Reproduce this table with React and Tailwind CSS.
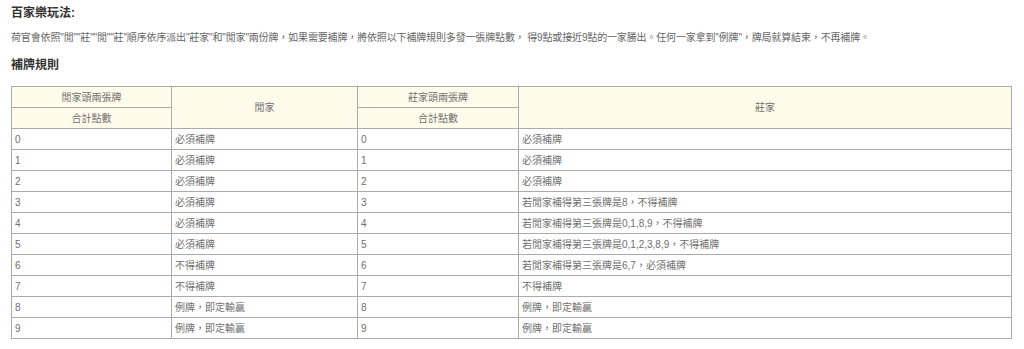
import React from "react";

const rows = [
  ["0", "必須補牌", "0", "必須補牌"],
  ["1", "必須補牌", "1", "必須補牌"],
  ["2", "必須補牌", "2", "必須補牌"],
  ["3", "必須補牌", "3", "若閒家補得第三張牌是8，不得補牌"],
  ["4", "必須補牌", "4", "若閒家補得第三張牌是0,1,8,9，不得補牌"],
  ["5", "必須補牌", "5", "若閒家補得第三張牌是0,1,2,3,8,9，不得補牌"],
  ["6", "不得補牌", "6", "若閒家補得第三張牌是6,7，必須補牌"],
  ["7", "不得補牌", "7", "不得補牌"],
  ["8", "例牌，即定輸贏", "8", "例牌，即定輸贏"],
  ["9", "例牌，即定輸贏", "9", "例牌，即定輸贏"],
];

const font = { fontFamily: '"Liberation Sans", "Noto Sans CJK TC", sans-serif' };

export default function App() {
  const th = "border border-[#ababab] bg-[#fffbeb] text-center font-normal text-[10px] text-[#6f6f6f] h-[21px] p-0";
  const td = "border border-[#ababab] text-left text-[10px] text-[#6f6f6f] h-[21px] px-[3px] py-0";

  return (
    <div className="w-[1024px] h-[349px] bg-white px-[11px] pt-[4px]" style={font}>
      <h2 className="text-[12px] font-bold text-[#333] leading-[18px]">百家樂玩法:</h2>
      <p className="mt-[9px] text-[10px] tracking-[-0.15px] text-[#666] leading-[14px]">
        荷官會依照"閒""莊""閒""莊"順序依序派出"莊家"和"閒家"兩份牌，如果需要補牌，將依照以下補牌規則多發一張牌點數， 得9點或接近9點的一家勝出。任何一家拿到"例牌"，牌局就算結束，不再補牌。
      </p>
      <h3 className="mt-[11px] text-[12px] font-bold text-[#333] leading-[18px]">補牌規則</h3>

      <table className="mt-[12px] w-[1001px] border-collapse table-fixed">
        <colgroup>
          <col className="w-[160px]" />
          <col className="w-[186px]" />
          <col className="w-[161px]" />
          <col />
        </colgroup>
        <thead>
          <tr>
            <th className={th}>閒家頭兩張牌</th>
            <th className={th} rowSpan={2}>閒家</th>
            <th className={th}>莊家頭兩張牌</th>
            <th className={th} rowSpan={2}>莊家</th>
          </tr>
          <tr>
            <th className={th}>合計點數</th>
            <th className={th}>合計點數</th>
          </tr>
        </thead>
        <tbody>
          {rows.map((r) => (
            <tr key={r[0]}>
              {r.map((c, i) => (
                <td key={i} className={td}>{c}</td>
              ))}
            </tr>
          ))}
        </tbody>
      </table>
    </div>
  );
}
